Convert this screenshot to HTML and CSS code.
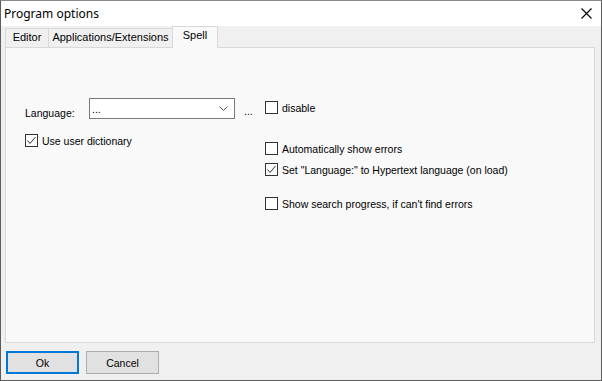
FILE: index.html
```html
<!DOCTYPE html>
<html lang="en">
<head>
    <meta charset="UTF-8">
    <title>Program options</title>
    <link rel="stylesheet" href="styles.css">
</head>
<body>
    <div class="window">
        <div class="titlebar">
            <span class="title">Program options</span>
            <svg class="close" width="11" height="11" viewBox="0 0 11 11">
                <path d="M0.5 0.5 L10.5 10.5 M10.5 0.5 L0.5 10.5" stroke="#000" stroke-width="1.1" fill="none"/>
            </svg>
        </div>

        <div class="tabs">
            <div class="tab tab-editor">Editor</div>
            <div class="tab tab-apps">Applications/Extensions</div>
            <div class="tab tab-spell active">Spell</div>
        </div>

        <div class="panel">
            <div class="col col-left">
                <div class="lang-row">
                    <span class="lang-label">Language:</span>
                    <div class="combo">
                        <span>...</span>
                        <svg width="9" height="5" viewBox="0 0 9 5">
                            <path d="M0.5 0.5 L4.5 4.5 L8.5 0.5" stroke="#555" fill="none"/>
                        </svg>
                    </div>
                    <span class="dots">...</span>
                </div>
                <label class="check row-dict">
                    <span class="box checked"></span>Use user dictionary
                </label>
            </div>
            <div class="col col-right">
                <label class="check row-disable">
                    <span class="box"></span>disable
                </label>
                <label class="check row-auto">
                    <span class="box"></span>Automatically show errors
                </label>
                <label class="check row-set">
                    <span class="box checked"></span>Set "Language:" to Hypertext language (on load)
                </label>
                <label class="check row-show">
                    <span class="box"></span>Show search progress, if can't find errors
                </label>
            </div>
        </div>

        <div class="buttons">
            <button class="btn btn-default">Ok</button>
            <button class="btn">Cancel</button>
        </div>
    </div>
</body>
</html>
```

FILE: styles.css
```css
body {
    margin: 0;
    background: #f0f0f0;
}
.window {
    width: 602px;
    height: 381px;
    box-sizing: border-box;
    border: 1px solid #5c5c5c;
    border-top-color: #8a8a8a;
    background: #f0f0f0;
    font-family: "Liberation Sans", Arial, sans-serif;
    font-size: 10.5px;
    color: #000;
}
.titlebar {
    height: 25px;
    background: #fff;
    display: flex;
    align-items: center;
    justify-content: space-between;
    padding: 0 9px 0 3px;
}
.title {
    font-family: "Noto Sans", "Open Sans", sans-serif;
    font-size: 12px;
}
.close {
    display: block;
}

.tabs {
    display: flex;
    align-items: flex-end;
    height: 21px;
    margin-left: 4px;
}
.tab {
    box-sizing: border-box;
    height: 19px;
    line-height: 17px;
    border: 1px solid #d9d9d9;
    border-bottom: none;
    margin-right: -1px;
    text-align: center;
    font-size: 11px;
    background: #f0f0f0;
}
.tab-editor { width: 44px; }
.tab-apps { width: 125px; }
.tab-spell { width: 46px; }
.tab.active {
    height: 22px;
    margin-bottom: -1px;
    padding-bottom: 4px;
    background: #f9f9f9;
    position: relative;
    z-index: 1;
}

.panel {
    box-sizing: border-box;
    width: 590px;
    height: 296px;
    margin-left: 4px;
    border: 1px solid #d9d9d9;
    background: #f9f9f9;
    display: flex;
    padding-left: 19px;
}
.col-left {
    width: 240px;
}
.col-right {
    flex: 1;
}

.lang-row {
    display: flex;
    align-items: flex-end;
    margin-top: 50px;
}
.lang-label {
    width: 64px;
    line-height: 13px;
    margin-bottom: -1px;
}
.combo {
    box-sizing: border-box;
    width: 146px;
    height: 21px;
    border: 1px solid #7a7a7a;
    background: #fff;
    display: flex;
    align-items: center;
    justify-content: space-between;
    padding: 0 6px 0 2px;
}
.combo span {
    margin-top: 1px;
}
.combo svg {
    display: block;
}
.dots {
    margin-left: 9px;
    line-height: 13px;
    margin-bottom: 1px;
}

.check {
    display: flex;
    align-items: center;
    height: 13px;
    gap: 4px;
    white-space: nowrap;
}
.box {
    box-sizing: border-box;
    width: 13px;
    height: 13px;
    border: 1px solid #333;
    background: #fff;
    flex: none;
}
.box.checked {
    background: #fff url("data:image/svg+xml;utf8,<svg xmlns='http://www.w3.org/2000/svg' width='11' height='11'><path d='M1.5 5.5 L4 8.5 L9.5 2' stroke='%23333' stroke-width='1' fill='none'/></svg>") no-repeat center;
}
.row-dict { margin-top: 15px; }
.row-disable { margin-top: 53px; }
.row-auto { margin-top: 28px; }
.row-set { margin-top: 8px; }
.row-show { margin-top: 21px; }

.buttons {
    display: flex;
    gap: 7px;
    margin: 8px 0 0 5px;
}
.btn {
    box-sizing: border-box;
    width: 73px;
    height: 23px;
    border: 1px solid #adadad;
    background: #e1e1e1;
    font-family: "Liberation Sans", Arial, sans-serif;
    font-size: 10.5px;
    color: #000;
    padding: 0;
}
.btn-default {
    border: 2px solid #0078d7;
}
```
